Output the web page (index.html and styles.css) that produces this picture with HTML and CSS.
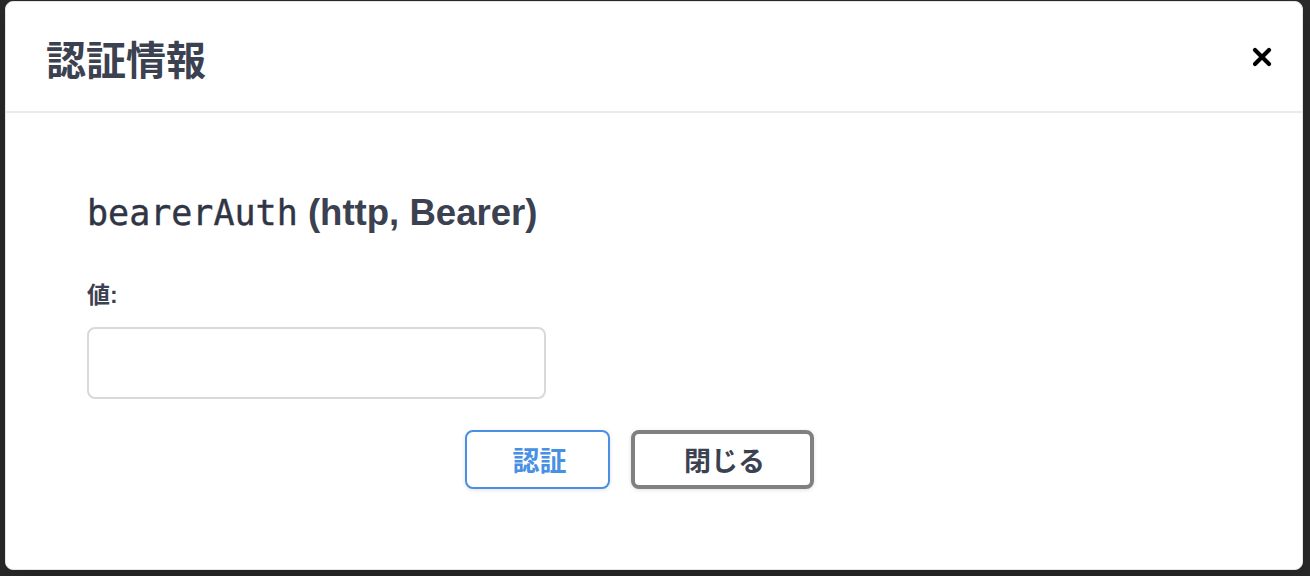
FILE: index.html
```html
<!DOCTYPE html>
<html lang="ja">
<head>
<meta charset="utf-8">
<title>認証情報</title>
<link rel="stylesheet" href="styles.css">
</head>
<body>
<div class="backdrop">
  <div class="modal">
    <div class="modal-header">
      <h3 class="modal-title">認証情報</h3>
      <button class="close-x" type="button" aria-label="閉じる">
        <svg width="20" height="20" viewBox="0 0 20 20"><path d="M3 3 L17 17 M17 3 L3 17" stroke="#000" stroke-width="4.2" stroke-linecap="round" fill="none"/></svg>
      </button>
    </div>
    <div class="modal-body">
      <h4 class="scheme"><code class="scheme-name">bearerAuth</code> (http, Bearer)</h4>
      <label class="field-label" for="val">値:</label>
      <input class="field-input" id="val" type="text">
      <div class="actions">
        <button class="btn btn-authorize" type="button">認証</button>
        <button class="btn btn-close" type="button">閉じる</button>
      </div>
    </div>
  </div>
</div>
</body>
</html>
```
FILE: styles.css
```css
html, body {
  margin: 0;
  padding: 0;
  background: #2a2a2a;
}
body {
  width: 1310px;
  height: 576px;
  overflow: hidden;
  font-family: "Liberation Sans", "Noto Sans CJK JP", sans-serif;
  color: #3b4151;
}
.backdrop {
  padding: 1px 7px 6px 5px;
}
.modal {
  box-sizing: border-box;
  width: 1298px;
  height: 569px;
  background: #fff;
  border: 1px solid #e4e4e4;
  border-radius: 8px;
  box-shadow: 0 10px 30px rgba(0,0,0,.2);
  display: flex;
  flex-direction: column;
}
.modal-header {
  height: 111px;
  border-bottom: 2px solid #ebebeb;
  display: flex;
  align-items: center;
  justify-content: space-between;
  padding: 0 30px 0 40px;
  box-sizing: border-box;
  flex: none;
}
.modal-title {
  margin: 0;
  font-family: "Noto Sans CJK JP", sans-serif;
  font-size: 40px;
  font-weight: 700;
  line-height: 1;
  color: #3b4151;
  position: relative;
  top: 1px;
}
.close-x {
  border: 0;
  background: none;
  padding: 0;
  width: 20px;
  height: 20px;
  display: flex;
  align-items: center;
  justify-content: center;
}
.modal-body {
  padding: 79px 80px 0 81px;
  display: flex;
  flex-direction: column;
  align-items: flex-start;
}
.scheme {
  margin: 0;
  font-family: "Liberation Sans", sans-serif;
  font-size: 36.6px;
  font-weight: 700;
  line-height: 42px;
  color: #3b4151;
  white-space: nowrap;
}
.scheme-name {
  font-family: "DejaVu Sans Mono", monospace;
  font-weight: 400;
  font-size: 35px;
  color: #2f3544;
  -webkit-text-stroke: 0.4px #2f3544;
}
.field-label {
  margin-top: 45px;
  font-family: "Liberation Sans", "Noto Sans CJK JP", sans-serif;
  font-size: 23px;
  font-weight: 700;
  line-height: 32px;
  color: #3b4151;
}
.field-input {
  margin-top: 16px;
  box-sizing: border-box;
  width: 459px;
  height: 72px;
  border: 2px solid #d9d9d9;
  border-radius: 8px;
  background: #fff;
  outline: none;
}
.actions {
  margin-top: 31px;
  align-self: stretch;
  display: flex;
  justify-content: center;
  gap: 21px;
  padding-right: 30px;
}
.btn {
  box-sizing: border-box;
  height: 59px;
  background: #fff;
  border-radius: 8px;
  font-family: "Noto Sans CJK JP", sans-serif;
  font-size: 27px;
  font-weight: 700;
  box-shadow: 0 1px 4px rgba(0,0,0,.12);
  padding: 0 0 0 4px;
}
.btn-authorize {
  width: 145px;
  border: 2px solid #4990e2;
  color: #4990e2;
}
.btn-close {
  width: 183px;
  border: 4px solid #808080;
  color: #3b4151;
  font-weight: 600;
}
```
